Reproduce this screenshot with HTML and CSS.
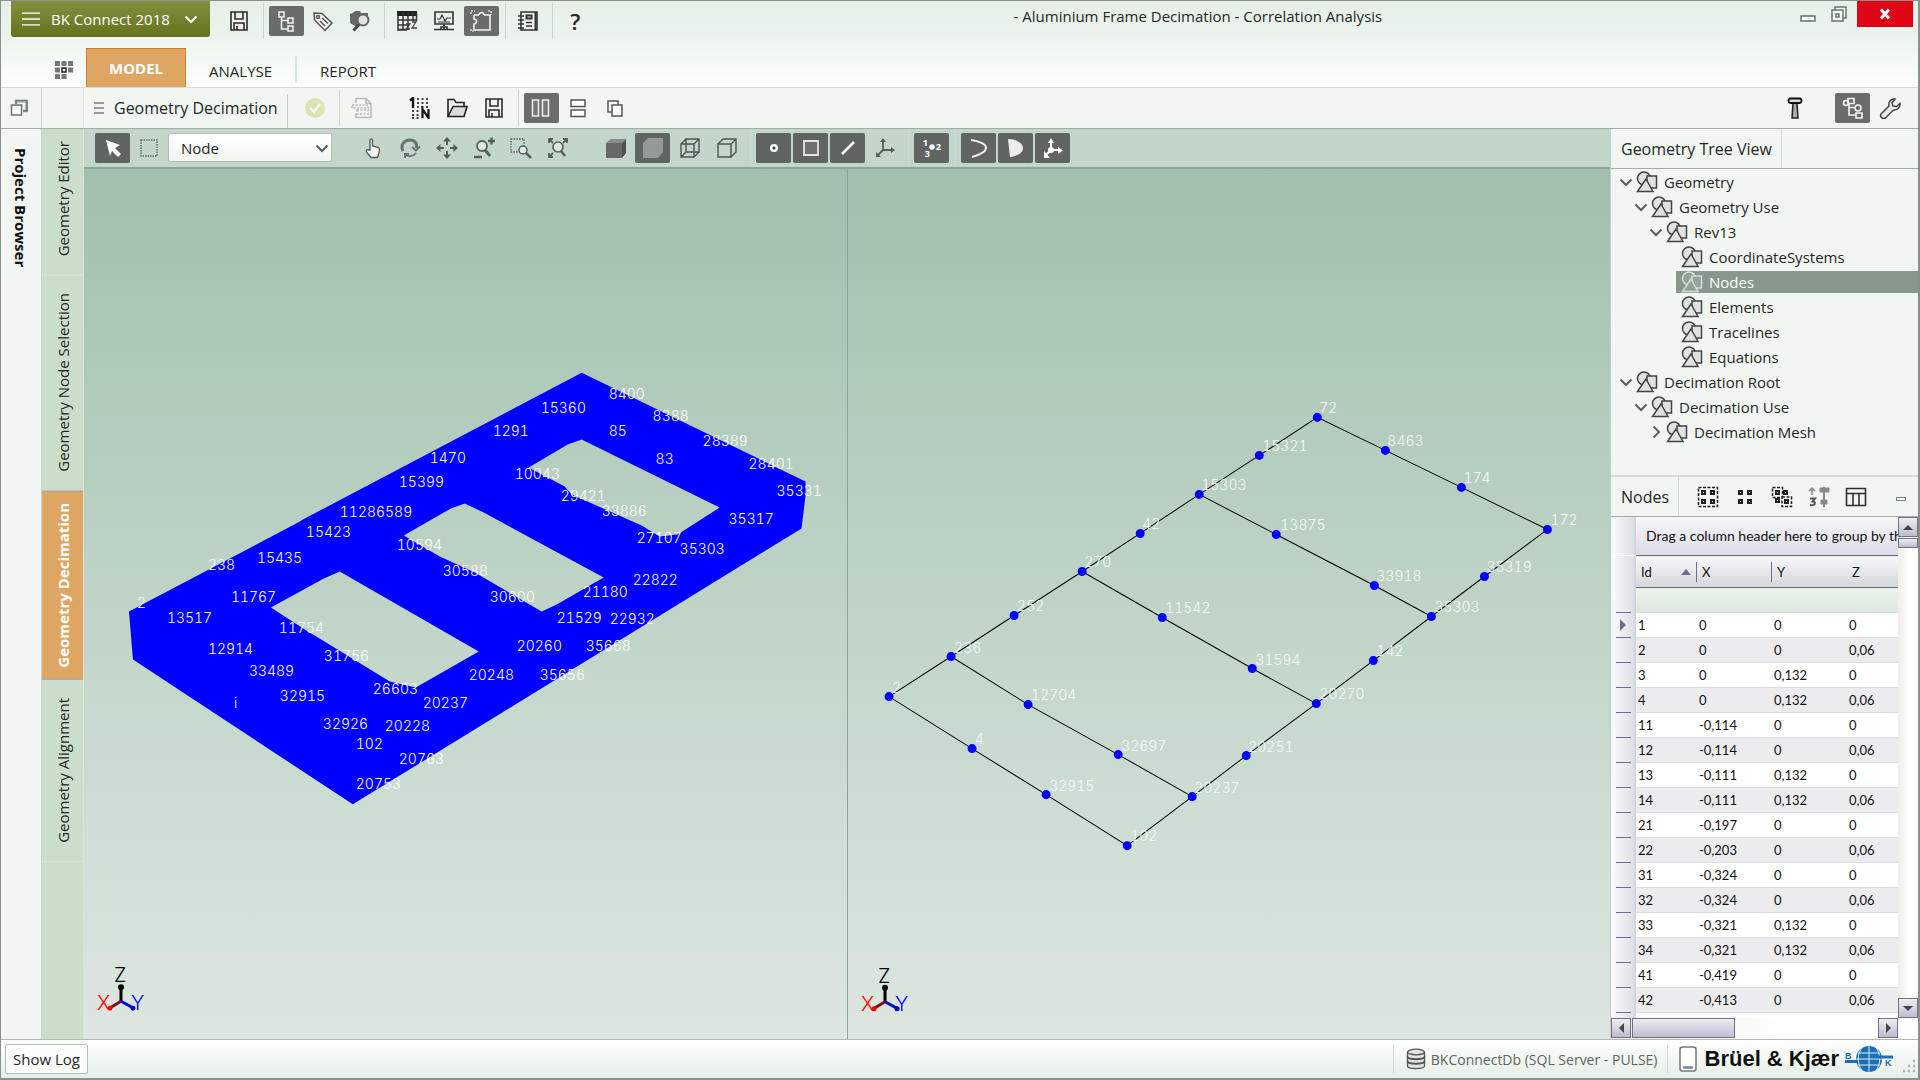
FILE: index.html
```html
<!DOCTYPE html>
<html lang="en">

<head>
  <meta charset="UTF-8">
  <meta name="viewport" content="width=device-width, initial-scale=1.0">
  <title>Aluminium Frame Decimation - Correlation Analysis</title>
  <link rel="stylesheet" href="styles.css">
</head>

<body>
  <svg class="defs" aria-hidden="true">
    <symbol id="i-save" viewBox="0 0 22 22"><path d="M3 2h16v18H3zM7 2v7h8V2M6 20v-7h10v7M9 20v-4" fill="#eef1ee" stroke="#2c2c2c" stroke-width="1.600" /></symbol>
    <symbol id="i-shape" viewBox="0 0 22 22"><g class="shape" stroke="currentColor" stroke-width="1.500"><circle cx="8" cy="7.500" r="6.500" /><path d="M11 5h9.500v12H11z" /><path d="M10 8l7 12.500H1.500z" /></g></symbol>
    <symbol id="i-down" viewBox="0 0 14 14"><path d="M1.500 4.500L7 10l5.500-5.500" fill="none" stroke="currentColor" stroke-width="2" /></symbol>
    <symbol id="i-menu" viewBox="0 0 20 16"><path d="M0 1.500h20M0 8h20M0 14.500h20" stroke="currentColor" stroke-width="1.600" /></symbol>
    <symbol id="i-triad" viewBox="0 0 54 46"><path d="M27 33V20" stroke="#000" stroke-width="3" /><circle cx="27" cy="19" r="3" /><path d="M27 33l-10 6" stroke="#801010" stroke-width="3" /><circle cx="16" cy="40" r="2.500" fill="#f00" /><path d="M27 33l11 6" stroke="#00d" stroke-width="3" /><circle cx="39" cy="40" r="2.500" fill="#00c" /></symbol>
  </svg>

  <header class="top">
    <div class="titlebar">
      <button class="app-menu" type="button">
        <svg class="burger"><use href="#i-menu" /></svg>
        BK Connect 2018
        <svg class="chev"><use href="#i-down" /></svg>
      </button>
      <div class="tools">
        <button class="btn" type="button" aria-label="Save"><svg><use href="#i-save" /></svg></button>
        <i class="sep"></i>
        <button class="btn on" type="button" aria-label="Project tree"><svg viewBox="0 0 22 22" fill="none" stroke="#f2f2f2" stroke-width="1.5"><path d="M4 2h5v5H4zM6.500 7v12H13M6.500 10.500H13M13 8h5v5h-5zM13 16h5v5h-5z" /></svg></button>
        <button class="btn" type="button" aria-label="Tags"><svg viewBox="0 0 22 22" fill="#f2f4f2" stroke="#555" stroke-width="1.500"><path d="M2 3l8 .5 10 9.500-7 7.500L2.500 10z" /><circle cx="6" cy="7" r="1.500" /><path d="M10 8l6 5.500M8 11l5 5" /></svg></button>
        <button class="btn" type="button" aria-label="Search"><svg viewBox="0 0 22 22"><path d="M1 4l3-1 2-2h5l1 2h7v3l-6 8-7 2-5-3z" fill="#666" /><circle cx="14" cy="10" r="5.500" fill="#dde3de" stroke="#666" stroke-width="2" /><path d="M10 14.500L4.500 20.500" stroke="#444" stroke-width="3" /></svg></button>
        <i class="sep"></i>
        <button class="btn" type="button" aria-label="Table"><svg viewBox="0 0 22 22"><path d="M1 1h20v5H1z" fill="#1e1e1e" /><path d="M2 2v18h9M7 2v18M12 2v18M17 2v9M20.500 2v9M2 10h18M2 15h11M2 19.500h9" fill="none" stroke="#333" stroke-width="1.500" /><path d="M10 14h4l-4 5h4M16 12h4l-4 6h5" fill="none" stroke="#444" stroke-width="1.300" /></svg></button>
        <button class="btn" type="button" aria-label="Monitor"><svg viewBox="0 0 22 22" fill="none" stroke="#333" stroke-width="1.600"><path d="M2 2h18v12H2zM1 19.500h20M8 19v-2h6v2M11 14v5" /><path d="M4 9h3l2-4 3 6 2-3h4M5 12h12" stroke-width="1.200" /></svg></button>
        <button class="btn on" type="button" aria-label="Layout"><svg viewBox="0 0 22 22" fill="none" stroke="#f2f2f2" stroke-width="1.600"><path d="M4 5h5M4 5v4a2.500 2.500 0 1 1 0 5v6h16v-6M20 14V5h-6M9 5a2.500 2.500 0 1 1 5 0" /><path d="M1 4V1h4M18 1h3v4M1 19v2h3" stroke-dasharray="2 1" stroke-width="1.200" /></svg></button>
        <i class="sep"></i>
        <button class="btn" type="button" aria-label="Notebook"><svg viewBox="0 0 22 22" fill="none" stroke="#333" stroke-width="1.600"><path d="M4 2h16v18H4z" /><path d="M18.500 2v18" stroke-width="2" /><path d="M1 6h6M1 10h6M1 14h6M1 18h6M9 12.500h6M9 16h6" /><path d="M9.500 5.500h5v3h-5z" stroke-width="2" /></svg></button>
        <i class="sep"></i>
        <button class="btn help" type="button">?</button>
      </div>
      <h1 class="title">- Aluminium Frame Decimation - Correlation Analysis</h1>
      <div class="win">
        <button type="button" aria-label="Minimize"><svg viewBox="0 0 22 22"><path d="M4 13h14v5H4z" fill="#fff" stroke="#68736b" stroke-width="1.500" /></svg></button>
        <button type="button" aria-label="Restore"><svg viewBox="0 0 22 22" fill="#f6faf6" stroke="#68736b" stroke-width="1.500"><path d="M7 4h11v11H7z" /><path d="M4 7h11v11H4z" /><path d="M8 11h3v3H8z" /></svg></button>
        <button class="close" type="button" aria-label="Close"><svg viewBox="0 0 22 22"><path d="M7 6.500l8 9M15 6.500l-8 9" stroke="#fff" stroke-width="3" /></svg></button>
      </div>
    </div>
    <nav class="tabs">
      <button class="grid-btn" type="button" aria-label="All tasks"><svg viewBox="0 0 20 20" fill="#777"><path d="M1 1h5v5H1zM7.500 1h5v5h-5zM14 1h5v5h-5zM1 7.500h5v5H1zM14 7.500h5v5h-5zM1 14h5v5H1zM7.500 14h5v5h-5z" /><path d="M8 8h4v4H8z" fill="#fff" stroke="#222" stroke-width="1.500" /></svg></button>
      <a class="tab active" href="#model">MODEL</a>
      <a class="tab" href="#analyse">ANALYSE</a>
      <i class="tab-sep"></i>
      <a class="tab" href="#report">REPORT</a>
    </nav>
  </header>

  <div class="bar">
    <div class="bar-left"><button class="float-btn" type="button" aria-label="Undock"><svg viewBox="0 0 18 18" fill="none" stroke="#6b756e" stroke-width="1.500"><path d="M6 5V2.500h10.500V12H13" stroke-width="3" stroke="#b8c0ba" /><path d="M6 5V1.500h11V12h-4" /><path d="M1.500 6h10v10h-10z" fill="#fff" /></svg></button></div>
    <div class="bar-gap"></div>
    <div class="bar-main">
      <svg class="burger-sm" viewBox="0 0 10 14"><path d="M0 2h10M0 7h10M0 12h10" stroke="#77837a" stroke-width="1.500" /></svg>
      <h2 class="bar-title">Geometry Decimation</h2>
      <i class="line"></i>
      <div class="tools">
        <button class="btn" type="button" aria-label="Apply"><svg viewBox="0 0 22 22"><circle cx="11" cy="11" r="10" fill="#dbe5b3" /><path d="M6 11l4 4 6-8" fill="none" stroke="#fff" stroke-width="2" /></svg></button>
        <i class="sep"></i>
        <button class="btn" type="button" aria-label="Report"><svg viewBox="0 0 22 22" fill="none" stroke="#b4bbb5" stroke-width="1.500"><path d="M5 6V1.500h10l5 5V20.500H5V16" /><path d="M15 1.500v5h5" /><path d="M1 8h16v3H1zM6 13h11v4H6z" stroke-dasharray="2 1.500" /></svg></button>
        <i class="space"></i>
        <button class="btn" type="button" aria-label="Renumber"><svg viewBox="0 0 22 22"><path d="M1 3.500L4 1v10" fill="none" stroke="#111" stroke-width="2.400" /><path d="M8 2h13M8 6h13M8 10h13M3 14h8M3 18h8M3 21h8" stroke="#444" stroke-width="1.800" stroke-dasharray="2 2.500" /><path d="M13.500 21v-9l6 9v-9" fill="none" stroke="#111" stroke-width="2.200" /></svg></button>
        <button class="btn" type="button" aria-label="Open"><svg viewBox="0 0 22 22" fill="#d9ddd9" stroke="#222" stroke-width="1.600"><path d="M2 19.500V2.500h6l2 3h8v4" fill="#f6f8f6" /><path d="M2 19.500l5-10h14l-3 10z" /></svg></button>
        <button class="btn" type="button" aria-label="Save"><svg><use href="#i-save" /></svg></button>
        <i class="sep"></i>
        <button class="btn on" type="button" aria-label="Side by side"><svg viewBox="0 0 22 22" fill="#777" stroke="#eee" stroke-width="1.500"><path d="M2.500 3h6v16h-6zM12.500 3h6v16h-6z" /></svg></button>
        <button class="btn" type="button" aria-label="Stacked"><svg viewBox="0 0 22 22" fill="#fdfefd" stroke="#555" stroke-width="1.500"><path d="M4 3h14v6.500H4zM4 13h14v6.500H4z" /></svg></button>
        <button class="btn" type="button" aria-label="Single"><svg viewBox="0 0 22 22" fill="#fdfefd" stroke="#555" stroke-width="1.500"><path d="M4 4h10v11H4z" /><path d="M8 8h10v11H8z" /></svg></button>
      </div>
      <div class="tools end">
        <button class="btn" type="button" aria-label="Hammer"><svg viewBox="0 0 22 22"><path d="M9 6h4l1 15H8z" fill="#aaa" stroke="#222" stroke-width="1.500" /><rect x="4.500" y="1.500" width="13" height="4.500" rx="2" fill="#ddd" stroke="#111" stroke-width="1.800" /></svg></button>
        <i class="space"></i>
        <button class="btn on" type="button" aria-label="Tree"><svg viewBox="0 0 22 22" fill="none" stroke="#f4f4f4" stroke-width="1.600"><path d="M6 1.500h6v5H6zM7 7v11h7M7 10.500h5M14 16h6v5h-6z" /><circle cx="4" cy="6" r="2.500" /><circle cx="16" cy="11" r="3" /></svg></button>
        <button class="btn" type="button" aria-label="Settings"><svg viewBox="0 0 22 22"><path d="M2 17l8-8c-1-4 2-7.500 6-7l-3 4 1 3 3.500.5L21 6.500c.5 4-3 7-6.500 6.500l-8 8c-3 1.500-6-1-4.500-4z" fill="#e6eae6" stroke="#444" stroke-width="1.500" /></svg></button>
      </div>
    </div>
  </div>

  <div class="work">
    <aside class="browser"><button type="button">Project Browser</button></aside>
    <nav class="steps">
      <a href="#editor">Geometry Editor</a>
      <a href="#selection">Geometry Node Selection</a>
      <a class="active" href="#decimation">Geometry Decimation</a>
      <a href="#alignment">Geometry Alignment</a>
    </nav>

    <main class="view">
      <div class="view-bar">
        <button class="btn on" type="button" aria-label="Pointer"><svg viewBox="0 0 22 22"><path d="M4 3l14 5-5 3 6 6-3 3-6-6-2 5z" fill="#fff" /></svg></button>
        <button class="btn small" type="button" aria-label="Box select"><svg viewBox="0 0 22 22"><path d="M3 3h16v16H3z" fill="none" stroke="#5e6e63" stroke-width="1.400" stroke-dasharray="1.500 1" /></svg></button>
        <div class="select">
          <select aria-label="Selection type">
            <option>Node</option>
            <option>Element</option>
          </select>
          <svg><use href="#i-down" /></svg>
        </div>
        <i class="space"></i>
        <button class="btn" type="button" aria-label="Pan hand"><svg viewBox="0 0 22 22"><path d="M8 13V3c0-1.500 2.500-1.500 2.500 0v6l6 1.500c1.500.5 1 5 0 6.500l-1 3.500H9L4.500 15c-1-2 1-3 2-2z" fill="#f4f6f4" stroke="#555" stroke-width="1.300" /></svg></button>
        <button class="btn" type="button" aria-label="Rotate"><svg viewBox="0 0 22 22" fill="none" stroke="#6a746d" stroke-width="3"><path d="M4 14c-3-6 1-11 7-11 5 0 8 4 6 8" /><path d="M13 10l4 3.500 4-4" stroke-width="2" /><path d="M17 16c-3 4-8 4-11 1M6 21v-4h4" stroke-width="2" /></svg></button>
        <button class="btn" type="button" aria-label="Move"><svg viewBox="0 0 22 22" fill="#566059"><path d="M11 0l4 4.500h-3V8h-2V4.500H7zM11 22l4-4.500h-3V14h-2v3.500H7zM0 11l4.500-4v3H8v2H4.500v3zM22 11l-4.500-4v3H14v2h3.500v3z" /></svg></button>
        <button class="btn" type="button" aria-label="Zoom"><svg viewBox="0 0 22 22" fill="none" stroke="#566059"><circle cx="9" cy="9" r="5" fill="#dfe8e2" stroke-width="1.800" /><path d="M12 13l5 6" stroke-width="2.800" /><path d="M15 4h7M18.500.5v7M1 20h8" stroke-width="2.400" /></svg></button>
        <button class="btn" type="button" aria-label="Zoom box"><svg viewBox="0 0 22 22" fill="none" stroke="#566059"><path d="M1 2h13v13H1z" stroke-width="1.300" stroke-dasharray="1.500 1.200" /><circle cx="13" cy="13" r="4" fill="#dfe8e2" stroke-width="1.500" /><path d="M16 16l5 5" stroke-width="2.500" /></svg></button>
        <button class="btn" type="button" aria-label="Zoom to fit"><svg viewBox="0 0 22 22" fill="none" stroke="#566059"><circle cx="11" cy="10" r="5" fill="#dfe8e2" stroke-width="1.600" /><path d="M14 14l4 5" stroke-width="2.500" /><path d="M2 6V2h4M16 2h4v4M2 16v4h4M2 2l4 4M20 2l-4 4M2 20l4-4" stroke-width="1.800" /></svg></button>
        <i class="space"></i>
        <button class="btn" type="button" aria-label="Solid"><svg viewBox="0 0 22 22"><path d="M1 6l5-4h15l-4 4z" fill="#8a8c8b" /><path d="M1 6h16v15H1z" fill="#676968" /><path d="M17 6l4-4v14l-4 5z" fill="#505251" /></svg></button>
        <button class="btn on" type="button" aria-label="Shaded"><svg viewBox="0 0 22 22"><path d="M1 6l5-5h15v14l-5 6H1z" fill="#949a96" /></svg></button>
        <button class="btn" type="button" aria-label="Wireframe"><svg viewBox="0 0 22 22" fill="none" stroke="#4c554f" stroke-width="1.400"><path d="M2 7h13v13H2zM7 2h13v13H7zM2 7l5-5M15 7l5-5M15 20l5-5M2 20l5-5" /></svg></button>
        <button class="btn" type="button" aria-label="Hidden line"><svg viewBox="0 0 22 22" fill="none" stroke="#4c554f" stroke-width="1.400"><path d="M2 7h13v13H2zM2 7l5-5h13v13l-5 5M15 7l5-5" /></svg></button>
        <i class="sep"></i>
        <button class="btn on" type="button" aria-label="Show nodes"><svg viewBox="0 0 22 22"><circle cx="11" cy="11" r="4" fill="#fff" /><circle cx="11" cy="11" r="1.500" fill="#333" /></svg></button>
        <button class="btn on" type="button" aria-label="Show faces"><svg viewBox="0 0 22 22"><path d="M4 4h14v14H4z" fill="#6d716f" stroke="#e4e4e4" stroke-width="1.800" /></svg></button>
        <button class="btn on" type="button" aria-label="Show lines"><svg viewBox="0 0 22 22"><path d="M5 17L17 5" stroke="#fff" stroke-width="2.500" /></svg></button>
        <button class="btn" type="button" aria-label="Show axes"><svg viewBox="0 0 22 22" fill="none" stroke="#566059" stroke-width="1.800"><path d="M9 13V3M9 13h10M9 13l-6 6" /><path d="M6 5l3-4 3 4zM17 10l4 3-4 3zM2 15v5h5z" fill="#566059" stroke="none" /></svg></button>
        <i class="sep"></i>
        <button class="btn on nums" type="button" aria-label="Show numbers"><svg viewBox="0 0 24 24" fill="#fff"><text x="2" y="10">1</text><text x="4" y="22">3</text><text x="16" y="14">2</text><circle cx="12" cy="11" r="3" /></svg></button>
        <i class="sep"></i>
        <button class="btn on" type="button" aria-label="Deformation"><svg viewBox="0 0 22 22"><path d="M3 3c8 1 15 4 15 8s-7 7-14 9" fill="none" stroke="#f0f0f0" stroke-width="2" /></svg></button>
        <button class="btn on" type="button" aria-label="Filled"><svg viewBox="0 0 22 22"><path d="M3 2c8 0 15 4 15 9s-6 8-13 9z" fill="#eceeec" /></svg></button>
        <button class="btn on" type="button" aria-label="Local axes"><svg viewBox="0 0 22 22" fill="none" stroke="#fff" stroke-width="2"><path d="M9 13V4M9 13h9M9 13l-5 5" /><path d="M6 6l3-5 3 5zM16 10l5 3.500-5 3.500zM2 14v7h6z" fill="#fff" stroke="none" /><circle cx="9" cy="13" r="2" fill="#fff" /></svg></button>
      </div>

      <div class="canvas">
        <div class="pane">
          <svg class="model" viewBox="84 169 763 869">
            <path fill="#00f" fill-rule="evenodd" d="M582 372L806 481L806 495L802 528L353 804L133 659L129 611L300 521L303 519ZM582 439L568 444L529 467L565 486L572 494L642 525L660 536L678 534L720 507ZM465 503L451 508L404 535L440 556L475 572L542 611L557 604L604 577L484 512ZM340 571L324 578L271 607L305 629L390 681L416 687L479 651L352 578Z" />
            <text x="609" y="398">8400</text><text x="541" y="412">15360</text><text x="493" y="435">1291</text><text x="609" y="435">85</text>
            <text x="653" y="420">8388</text><text x="703" y="445">28389</text><text x="749" y="468">28401</text><text x="777" y="495">35331</text>
            <text x="729" y="523">35317</text><text x="680" y="553">35303</text><text x="637" y="542">27107</text><text x="602" y="515">33886</text>
            <text x="561" y="500">29421</text><text x="515" y="478">10043</text><text x="656" y="463">83</text><text x="430" y="462">1470</text>
            <text x="399" y="486">15399</text><text x="633" y="584">22822</text><text x="583" y="596">21180</text><text x="557" y="623">21529</text>
            <text x="610" y="624">22932</text><text x="517" y="651">20260</text><text x="586" y="651">35668</text><text x="469" y="680">20248</text>
            <text x="540" y="680">35656</text><text x="443" y="575">30588</text><text x="490" y="602">30600</text><text x="397" y="549">10594</text>
            <text x="137" y="608">2</text><text x="208" y="569">238</text><text x="257" y="562">15435</text><text x="306" y="536">15423</text>
            <text x="340" y="516">11286589</text><text x="231" y="602">11767</text><text x="167" y="623">13517</text><text x="279" y="633">11754</text>
            <text x="324" y="661">31756</text><text x="208" y="654">12914</text><text x="249" y="676">33489</text><text x="280" y="701">32915</text>
            <text x="234" y="708">i</text><text x="323" y="729">32926</text><text x="356" y="749">102</text><text x="356" y="789">20753</text>
            <text x="373" y="694">26603</text><text x="385" y="731">20228</text><text x="399" y="764">20763</text><text x="423" y="708">20237</text>
            <use href="#i-triad" x="94" y="968" width="54" height="46" />
            <text class="z" x="114" y="982">Z</text><text class="x" x="97" y="1010">X</text><text class="y" x="131" y="1010">Y</text>
          </svg>
        </div>
        <div class="pane">
          <svg class="model" viewBox="848 169 762 869">
            <path fill="none" stroke="#000" d="M889 696L951 656L1014 615L1082 571L1140 533L1199 494L1259 455L1317 417L1385 450L1461 487L1547 529L1484 576L1431 616L1373 660L1316 703L1246 755L1192 796L1127 845L1046 794L972 748ZM951 656L1028 704L1118 754L1192 796M1082 571L1162 617L1252 668L1316 703M1199 494L1276 534L1374 585L1431 616" />
            <!-- zero-length round-capped segments, one per node -->
            <path class="nodes" d="M889 696h0M951 656h0M1014 615h0M1082 571h0M1140 533h0M1199 494h0M1259 455h0M1317 417h0M1385 450h0M1461 487h0M1547 529h0M1484 576h0M1431 616h0M1373 660h0M1316 703h0M1246 755h0M1192 796h0M1127 845h0M1046 794h0M972 748h0M1028 704h0M1118 754h0M1162 617h0M1252 668h0M1276 534h0M1374 585h0" />
            <g class="soft">
              <text x="1319" y="413">72</text><text x="1387" y="446">8463</text><text x="1463" y="483">174</text><text x="1550" y="525">172</text>
              <text x="1486" y="572">35319</text><text x="1434" y="612">35303</text><text x="1376" y="655">142</text><text x="1319" y="698">20270</text>
              <text x="1248" y="751">20251</text><text x="1194" y="792">20237</text><text x="1130" y="840">102</text><text x="1049" y="790">32915</text>
              <text x="975" y="743">4</text><text x="892" y="692">2</text><text x="954" y="652">236</text><text x="1017" y="611">252</text>
              <text x="1084" y="567">270</text><text x="1142" y="529">42</text><text x="1201" y="490">15303</text><text x="1262" y="451">15321</text>
              <text x="1280" y="530">13875</text><text x="1376" y="581">33918</text><text x="1165" y="613">11542</text><text x="1255" y="664">31594</text>
              <text x="1031" y="699">12704</text><text x="1121" y="750">32697</text>
            </g>
            <use href="#i-triad" x="858" y="968" width="54" height="46" />
            <text class="z" x="878" y="982">Z</text><text class="x" x="861" y="1010">X</text><text class="y" x="895" y="1010">Y</text>
          </svg>
        </div>
      </div>
    </main>

    <aside class="side">
      <div class="side-head"><h2>Geometry Tree View</h2></div>
      <ul class="tree">
        <li class="l0"><svg class="arr"><use href="#i-down" /></svg><svg class="ico"><use href="#i-shape" /></svg>Geometry</li>
        <li class="l1"><svg class="arr"><use href="#i-down" /></svg><svg class="ico"><use href="#i-shape" /></svg>Geometry Use</li>
        <li class="l2"><svg class="arr"><use href="#i-down" /></svg><svg class="ico"><use href="#i-shape" /></svg>Rev13</li>
        <li class="l3"><span><svg class="ico"><use href="#i-shape" /></svg>CoordinateSystems</span></li>
        <li class="l3"><span class="selected"><svg class="ico"><use href="#i-shape" /></svg>Nodes</span></li>
        <li class="l3"><span><svg class="ico"><use href="#i-shape" /></svg>Elements</span></li>
        <li class="l3"><span><svg class="ico"><use href="#i-shape" /></svg>Tracelines</span></li>
        <li class="l3"><span><svg class="ico"><use href="#i-shape" /></svg>Equations</span></li>
        <li class="l0"><svg class="arr"><use href="#i-down" /></svg><svg class="ico"><use href="#i-shape" /></svg>Decimation Root</li>
        <li class="l1"><svg class="arr"><use href="#i-down" /></svg><svg class="ico"><use href="#i-shape" /></svg>Decimation Use</li>
        <li class="l2"><svg class="arr closed"><use href="#i-down" /></svg><svg class="ico"><use href="#i-shape" /></svg>Decimation Mesh</li>
      </ul>

      <div class="side-head nodes-head">
        <h2>Nodes</h2>
        <div class="tools">
          <button class="btn" type="button" aria-label="Select all"><svg viewBox="0 0 22 22" fill="none" stroke="#222" stroke-width="2"><path d="M1.500 1.500h19v19h-19z" stroke-width="1.500" stroke-dasharray="3 1.500" /><path d="M5 5h3v3H5zM14 5h3v3h-3zM5 14h3v3H5zM14 14h3v3h-3z" /></svg></button>
          <button class="btn" type="button" aria-label="Select none"><svg viewBox="0 0 22 22" fill="none" stroke="#222" stroke-width="2"><path d="M5 5h3v3H5zM14 5h3v3h-3zM5 14h3v3H5zM14 14h3v3h-3z" /></svg></button>
          <button class="btn" type="button" aria-label="Invert"><svg viewBox="0 0 22 22" fill="none" stroke="#222" stroke-width="2"><path d="M1.500 1.500h10v10h-10zM11 11h9.500v9.500H11z" stroke-width="1.500" stroke-dasharray="3 1.500" /><path d="M5 5h3v3H5zM13 5h3v3h-3zM5 13h3v3H5zM14 14h3v3h-3z" /></svg></button>
          <button class="btn" type="button" aria-label="Sort"><svg viewBox="0 0 22 22" fill="none" stroke="#888"><path d="M4 9V2M1 5l3-3 3 3" stroke-width="1.500" /><path d="M2 12.500h5l-2.500 3c4 0 3 5-2.500 3.500" stroke="#555" stroke-width="2" /><path d="M16 1v20" stroke-width="2" /><path d="M12 2h9v4h-9zM13 14h6v4h-6z" fill="#888" /></svg></button>
          <button class="btn" type="button" aria-label="Columns"><svg viewBox="0 0 22 22" fill="none" stroke="#2e2e2e" stroke-width="1.600"><path d="M1.500 2.500h19v17h-19zM1.500 7.500h19M8 7.500v12M14 7.500v12" /></svg></button>
        </div>
        <button class="mini" type="button" aria-label="Collapse"></button>
      </div>

      <div class="grid">
        <div class="grid-body">
          <div class="group"><i></i><p>Drag a column header here to group by that column</p></div>
          <table>
            <thead>
              <tr><th class="g"></th><th class="id"><span>Id<i class="sort"></i></span></th><th><span>X</span></th><th class="plain"><span>Y</span></th><th>Z</th></tr>
            </thead>
            <tbody>
              <tr class="filter"><td class="g"></td><td colspan="4"></td></tr>
              <tr><td class="g"><i class="cur"></i></td><td>1</td><td>0</td><td>0</td><td>0</td></tr>
              <tr><td class="g"></td><td>2</td><td>0</td><td>0</td><td>0,06</td></tr>
              <tr><td class="g"></td><td>3</td><td>0</td><td>0,132</td><td>0</td></tr>
              <tr><td class="g"></td><td>4</td><td>0</td><td>0,132</td><td>0,06</td></tr>
              <tr><td class="g"></td><td>11</td><td>-0,114</td><td>0</td><td>0</td></tr>
              <tr><td class="g"></td><td>12</td><td>-0,114</td><td>0</td><td>0,06</td></tr>
              <tr><td class="g"></td><td>13</td><td>-0,111</td><td>0,132</td><td>0</td></tr>
              <tr><td class="g"></td><td>14</td><td>-0,111</td><td>0,132</td><td>0,06</td></tr>
              <tr><td class="g"></td><td>21</td><td>-0,197</td><td>0</td><td>0</td></tr>
              <tr><td class="g"></td><td>22</td><td>-0,203</td><td>0</td><td>0,06</td></tr>
              <tr><td class="g"></td><td>31</td><td>-0,324</td><td>0</td><td>0</td></tr>
              <tr><td class="g"></td><td>32</td><td>-0,324</td><td>0</td><td>0,06</td></tr>
              <tr><td class="g"></td><td>33</td><td>-0,321</td><td>0,132</td><td>0</td></tr>
              <tr><td class="g"></td><td>34</td><td>-0,321</td><td>0,132</td><td>0,06</td></tr>
              <tr><td class="g"></td><td>41</td><td>-0,419</td><td>0</td><td>0</td></tr>
              <tr><td class="g"></td><td>42</td><td>-0,413</td><td>0</td><td>0,06</td></tr>
            </tbody>
          </table>
          <div class="group rest"><i></i></div>
        </div>
        <div class="vscroll"><i class="sb up"></i><i class="sb thumb"></i><i class="sb down"></i></div>
        <div class="hscroll"><i class="sb left"></i><i class="sb thumb"></i><i class="sb right"></i></div>
      </div>
    </aside>
  </div>

  <footer class="status">
    <button class="log" type="button">Show Log</button>
    <div class="db">
      <svg viewBox="0 0 20 22" fill="#e2e6e2" stroke="#555" stroke-width="1.300"><path d="M1.500 4v14c0 3.500 17 3.500 17 0V4" /><ellipse cx="10" cy="4" rx="8.500" ry="2.800" /><path d="M1.500 8.500c0 3.500 17 3.500 17 0M1.500 13c0 3.500 17 3.500 17 0" fill="none" stroke-width="2" /></svg>
      BKConnectDb (SQL Server - PULSE)
    </div>
    <div class="brand">
      <svg class="tablet" viewBox="0 0 18 26"><rect x="1" y="1" width="16" height="24" rx="2.500" fill="#fff" stroke="#777" stroke-width="1.500" /><path d="M4 21.500h10" stroke="#6c86a8" stroke-width="2.500" /></svg>
      <strong>Brüel &amp; Kjær</strong>
      <svg class="globe" viewBox="0 0 48 28"><circle cx="24" cy="14" r="13" fill="#1b6fb5" /><path d="M11 14h26M13 8h22M13 20h22M24 1v26M17 2.500c-5 7-5 16 0 23M31 2.500c5 7 5 16 0 23" fill="none" stroke="#dcecf7" stroke-width="1" /><path d="M0 16.500h13M33 12h15" stroke="#1b6fb5" stroke-width="3" /><text x="0" y="14">B</text><text x="40" y="21">K</text></svg>
      <svg class="grip" viewBox="0 0 14 14"><path d="M11 2h2M11 7h2M6 7h2M1 12h2M6 12h2M11 12h2" stroke="#a9b3ab" stroke-width="2.500" /></svg>
    </div>
  </footer>
</body>

</html>
```
FILE: styles.css
```css
* {
  box-sizing: border-box;
}

body {
  display: flex;
  flex-direction: column;
  height: 100vh;
  margin: 0;
  overflow: hidden;
  border: 1px solid #87938a;
  border-width: 1px 2px 2px 1px;
  font-family: "Open Sans", "Noto Sans", sans-serif;
  font-size: 15px;
  color: #262626;
  background-color: #f1f6f2;
}

button,
select {
  font: inherit;
  color: inherit;
  padding: 0;
  border: 0;
  background: none;
}

a {
  color: inherit;
  text-decoration: none;
}

h1,
h2,
p,
ul {
  margin: 0;
  padding: 0;
  font-size: inherit;
  font-weight: normal;
}

.defs {
  position: absolute;
  width: 0;
  height: 0;
}

.shape {
  fill: var(--shape-fill, #dfe3df);
}

/* header */
.top {
  display: flex;
  flex-direction: column;
  height: 87px;
  flex: none;
  background: linear-gradient(#e6f0e7, #eaf4ec 40%, #fff);
  border-bottom: 1px solid #d3dfd2;
}

.titlebar {
  display: flex;
  height: 47px;
}

.app-menu {
  display: flex;
  align-items: center;
  gap: 11px;
  height: 36px;
  margin-left: 10px;
  padding: 0 12px 0 11px;
  border-radius: 0 0 3px 3px;
  background: linear-gradient(#828f3f, #65731c);
  color: #fff;
}

.burger {
  width: 18px;
  height: 16px;
}

.chev {
  width: 14px;
  height: 14px;
  margin-left: 3px;
}

.tools {
  display: flex;
  align-items: center;
  gap: 2px;
}

.titlebar .tools {
  height: 40px;
  margin-left: 12px;
}

.btn {
  display: flex;
  align-items: center;
  justify-content: center;
  width: 35px;
  height: 30px;
  flex: none;
  border-radius: 2px;
}

.btn svg {
  width: 22px;
  height: 22px;
}

.btn.on {
  background-color: #6b6d6c;
}

.btn.small {
  width: 34px;
}

.help {
  font-size: 22px;
  font-weight: 600;
}

.sep {
  width: 1px;
  height: 36px;
  margin: 0 3px 0 4px;
  background-color: #cdd8ce;
}

.space {
  width: 19px;
}

.title {
  flex: 1;
  padding: 5px 0 0 8px;
  line-height: 20px;
  text-align: center;
}

.win {
  display: flex;
  gap: 5px;
  margin-right: 5px;
}

.win button {
  height: 26px;
  width: 26px;
}

.win svg {
  display: block;
  width: 22px;
  height: 22px;
  margin: 1px auto;
}

.win .close {
  width: 56px;
  background-color: #de0514;
}

.tabs {
  display: flex;
  flex: 1;
}

.grid-btn {
  width: 85px;
  padding: 8px 0 0 40px;
}

.grid-btn svg {
  width: 20px;
  height: 20px;
}

.tab {
  display: flex;
  align-items: center;
  padding: 6px 23px 0;
}

.tab.active {
  padding: 0 22px;
  border: 1px solid #d47c2a;
  border-bottom: 0;
  background-color: #dea563;
  color: #fff;
  font-weight: bold;
}

.tab-sep {
  width: 2px;
  margin: 8px 0 4px;
  background-color: #dbe6da;
}

/* task bar */
.bar {
  display: flex;
  height: 41px;
  flex: none;
  border-bottom: 1px solid #a3aca5;
}

.bar-left {
  display: flex;
  align-items: center;
  justify-content: center;
  width: 41px;
  padding-right: 4px;
  border-right: 1px solid #c9cfca;
}

.float-btn svg {
  display: block;
  width: 18px;
  height: 18px;
}

.bar-gap {
  width: 42px;
  border-right: 1px solid #e1e6e2;
}

.bar-main {
  display: flex;
  flex: 1;
  align-items: center;
  padding: 0 11px 0 10px;
}

.burger-sm {
  width: 10px;
  height: 14px;
}

.bar-title {
  padding: 0 9px 0 10px;
  font-size: 16px;
  font-weight: 500;
}

.line {
  width: 1px;
  align-self: stretch;
  margin: 6px 10px 0 0;
  background-color: #c2cac3;
}

.tools.end {
  margin-left: auto;
}

/* work area */
.work {
  display: flex;
  flex: 1;
  min-height: 0;
}

.browser {
  width: 41px;
  flex: none;
  border-right: 1px solid #c9cfca;
  text-align: center;
}

.browser button {
  writing-mode: vertical-rl;
  margin-top: 19px;
  font-weight: bold;
  color: #111;
}

.steps {
  display: flex;
  flex-direction: column;
  width: 42px;
  flex: none;
  border-right: 1px solid #dbe4da;
  background-color: #cbdecb;
}

/* the labels are turned round, so bottom padding shows above the text */
.steps a {
  display: flex;
  align-items: center;
  writing-mode: vertical-rl;
  transform: rotate(180deg);
  width: 41px;
  padding: 18px 0;
  border-top: 1px solid #d8e6d8;
}

.steps a:first-child {
  padding-bottom: 12px;
}

.steps .active {
  padding: 11px 0;
  background-color: #dea563;
  border: 1px solid #a9a7a0;
  border-width: 1px 0;
  color: #fff;
  font-weight: bold;
}

.view {
  display: flex;
  flex-direction: column;
  flex: 1;
  min-width: 0;
}

.view-bar {
  display: flex;
  align-items: center;
  gap: 2px;
  height: 40px;
  padding: 0 11px 1px;
  background-color: #c2d6ca;
  border-bottom: 2px solid #8ba696;
}

.view-bar .btn.on {
  background-color: #606462;
}

.view-bar .sep {
  background-color: #d3d8d4;
}

.select {
  position: relative;
  width: 164px;
}

.select select {
  width: 100%;
  height: 29px;
  padding-left: 12px;
  appearance: none;
  border: 1px solid #b4bdb6;
  border-radius: 2px;
  background: linear-gradient(#fff, #f2f5f2);
}

.select svg {
  position: absolute;
  top: 8px;
  right: 3px;
  width: 14px;
  height: 14px;
  color: #52635a;
}

.nums svg {
  overflow: visible;
}

.nums text {
  font-size: 10px;
  font-weight: bold;
}

.canvas {
  display: flex;
  flex: 1;
  min-height: 0;
  background: linear-gradient(#a0bfac, #b2cbbb 27%, #cfdfd5 78%, #dde6e1);
}

.pane {
  flex: 1;
  min-width: 0;
}

.pane + .pane {
  border-left: 1px solid #8ea497;
}

.model {
  display: block;
  width: 100%;
  height: 100%;
}

.model text {
  font-family: Inter, "Liberation Sans", Arial, sans-serif;
  font-size: 14px;
  font-weight: 300;
  font-variant-numeric: tabular-nums;
  fill: #fff;
}

.model .soft text {
  fill: #f6faf7;
}

.model .nodes {
  fill: none;
  stroke: #00f;
  stroke-width: 9px;
  stroke-linecap: round;
}

.model .x,
.model .y,
.model .z {
  font-size: 20px;
}

.model .x {
  fill: #f00;
}

.model .y {
  fill: #00f;
}

.model .z {
  fill: #000;
}

/* right side */
.side {
  display: flex;
  flex-direction: column;
  width: 308px;
  flex: none;
  border-left: 1px solid #c5cdc7;
}

.side-head {
  display: flex;
  height: 40px;
  flex: none;
  padding-left: 10px;
  border-bottom: 1px solid #a3aca5;
}

.side-head h2 {
  display: flex;
  align-items: center;
  padding-right: 9px;
  border-right: 1px solid #d5dbd6;
  font-size: 16px;
  font-weight: 500;
}

.tree {
  height: 308px;
  flex: none;
  list-style: none;
  border-bottom: 2px solid #d6dbd7;
}

.tree li {
  display: flex;
  align-items: center;
  height: 25px;
}

.l0 {
  padding-left: 8px;
}

.l1 {
  padding-left: 23px;
}

.l2 {
  padding-left: 38px;
}

.l3 {
  padding-left: 65px;
}

.l3 span {
  display: flex;
  flex: 1;
  align-items: center;
  padding-left: 5px;
}

.tree .selected {
  background-color: #87978b;
  color: #fff;
}

.arr {
  width: 14px;
  height: 14px;
  margin-right: 3px;
  color: #56625a;
}

.arr.closed {
  transform: rotate(-90deg);
}

.ico {
  width: 22px;
  height: 22px;
  margin-right: 6px;
  color: #444;
}

.selected .ico {
  --shape-fill: #93a297;
  color: #d3dcd5;
}

.nodes-head .tools {
  margin-left: 11px;
}

.mini {
  align-self: center;
  width: 10px;
  height: 4px;
  margin: 4px 12px 0 auto;
  border: 1px solid #7a857d;
}

.grid {
  display: grid;
  grid-template-columns: 1fr 20px;
  grid-template-rows: 1fr 21px;
  flex: 1;
  min-height: 0;
  font-family: Lato, sans-serif;
  font-size: 13px;
  color: #111;
  background-color: #fff;
}

.grid-body {
  display: flex;
  flex-direction: column;
  overflow: hidden;
}

.group {
  display: flex;
  height: 38px;
  flex: none;
  background: linear-gradient(#f6f6fa, #dcdce8);
  white-space: nowrap;
}

.group i,
.g {
  width: 25px;
  flex: none;
  background: linear-gradient(90deg, #fcfcfd, #dcdfe5 90%, #ccd0d6);
}

.group p {
  padding-left: 10px;
  font-size: 14px;
  line-height: 38px;
}

.group.rest {
  flex: 1;
  background: #fff;
}

table {
  width: 100%;
  table-layout: fixed;
  border-collapse: collapse;
}

tr {
  height: 25px;
}

thead tr {
  height: 32px;
}

th {
  width: 75px;
  padding: 0;
  border: 1px solid #6d6d78;
  border-width: 1px 0;
  background: linear-gradient(#f8f8fa, #d4d5da);
  font-weight: normal;
  text-align: left;
}

th:last-child {
  width: auto;
  padding-left: 5px;
}

th.id {
  width: 61px;
}

th span {
  display: flex;
  align-items: center;
  justify-content: space-between;
  height: 20px;
  padding: 0 5px;
  border-right: 1px solid #6c6c9a;
}

th.plain span {
  border: 0;
}

th.g {
  width: 25px;
  border: 0;
  background: linear-gradient(90deg, #fcfcfd, #dcdfe5 90%, #ccd0d6);
}

.sort {
  border: 5px solid transparent;
  border-top: 0;
  border-bottom: 6px solid #6c6c9a;
}

td {
  padding: 0 0 0 2px;
  border-bottom: 1px solid #dcdde0;
}

tbody tr:nth-child(odd) td {
  background-color: #ececef;
}

tbody .filter td:last-child {
  background: linear-gradient(#e9f3ea, #dde8de);
}

tbody tr td.g {
  padding: 0 0 0 9px;
  border: 0;
  background: linear-gradient(#6c6c9a, #6c6c9a) 5px 100% / 15px 1px no-repeat, linear-gradient(90deg, #fcfcfd, #dcdfe5 90%, #ccd0d6);
}

.cur {
  display: block;
  width: 0;
  border: 6px solid transparent;
  border-left-color: #6c6c9a;
  border-right: 0;
}

.vscroll {
  display: flex;
  flex-direction: column;
  background: linear-gradient(90deg, #efeee9, #fff 60%);
}

.hscroll {
  display: flex;
  background: linear-gradient(90deg, #ece8e0, #fff 60%);
}

.sb {
  display: flex;
  align-items: center;
  justify-content: center;
  width: 20px;
  height: 20px;
  border: 1px solid #72727e;
  background: linear-gradient(#eeeef5, #bcbcd2);
}

.sb::before {
  border: 5px solid transparent;
}

.up::before {
  content: '';
  border-top: 0;
  border-bottom-color: #444;
}

.down {
  margin-top: auto;
}

.down::before {
  content: '';
  border-bottom: 0;
  border-top-color: #444;
}

.left::before {
  content: '';
  border-left: 0;
  border-right-color: #444;
}

.right {
  margin-left: auto;
}

.right::before {
  content: '';
  border-right: 0;
  border-left-color: #444;
}

.vscroll .thumb {
  height: 10px;
  margin-top: 1px;
}

.hscroll .thumb {
  width: 36%;
  margin-left: 1px;
}

/* status bar */
.status {
  display: flex;
  align-items: center;
  height: 39px;
  flex: none;
  padding-left: 4px;
  border-top: 1px solid #b0b9b2;
  background: linear-gradient(#fff, #e4efe6);
}

.log {
  height: 30px;
  padding: 0 7px;
  border: 1px solid #b6beb8;
  border-radius: 2px;
  background-color: #fbfdfb;
}

.db {
  display: flex;
  align-items: center;
  gap: 5px;
  height: 28px;
  margin-left: auto;
  padding: 0 9px 0 12px;
  border: 1px solid #d2dad3;
  border-width: 0 1px;
  font-size: 14px;
  color: #5f6661;
}

.db svg {
  width: 20px;
  height: 22px;
}

.brand {
  display: flex;
  align-items: center;
  padding: 0 2px 0 11px;
  font-family: "Liberation Sans", Arial, sans-serif;
  font-size: 22px;
  color: #111;
}

.tablet {
  width: 18px;
  height: 26px;
  margin-right: 8px;
}

.globe {
  width: 48px;
  height: 28px;
  margin-left: 6px;
}

.globe text {
  font-size: 9px;
  font-weight: bold;
  fill: #1b6fb5;
}

.grip {
  align-self: flex-end;
  width: 14px;
  height: 14px;
  margin-left: 9px;
}
```
